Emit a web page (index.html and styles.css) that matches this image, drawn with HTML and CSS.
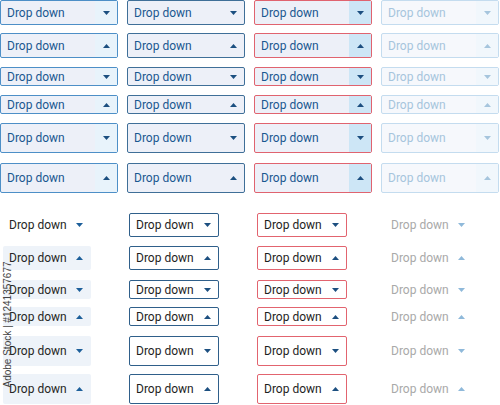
FILE: index.html
```html
<!DOCTYPE html>
<html>
<head>
<meta charset="utf-8">
<link rel="stylesheet" href="styles.css">
</head>
<body>
<div class="top">
  <div class="dd a m"><span class="lbl">Drop down</span><span class="car"><svg viewBox="0 0 7 4" class="dn"><polygon points="0,0 7,0 3.5,4"/></svg></span></div>
  <div class="dd b m"><span class="lbl">Drop down</span><span class="car"><svg viewBox="0 0 7 4" class="dn"><polygon points="0,0 7,0 3.5,4"/></svg></span></div>
  <div class="dd c m"><span class="lbl">Drop down</span><span class="car"><svg viewBox="0 0 7 4" class="dn"><polygon points="0,0 7,0 3.5,4"/></svg></span></div>
  <div class="dd d m"><span class="lbl">Drop down</span><span class="car"><svg viewBox="0 0 7 4" class="dn"><polygon points="0,0 7,0 3.5,4"/></svg></span></div>

  <div class="dd a m"><span class="lbl">Drop down</span><span class="car"><svg viewBox="0 0 7 4"><polygon points="0,4 7,4 3.5,0"/></svg></span></div>
  <div class="dd b m"><span class="lbl">Drop down</span><span class="car"><svg viewBox="0 0 7 4"><polygon points="0,4 7,4 3.5,0"/></svg></span></div>
  <div class="dd c m"><span class="lbl">Drop down</span><span class="car"><svg viewBox="0 0 7 4"><polygon points="0,4 7,4 3.5,0"/></svg></span></div>
  <div class="dd d m"><span class="lbl">Drop down</span><span class="car"><svg viewBox="0 0 7 4"><polygon points="0,4 7,4 3.5,0"/></svg></span></div>

  <div class="dd a s"><span class="lbl">Drop down</span><span class="car"><svg viewBox="0 0 7 4"><polygon points="0,0 7,0 3.5,4"/></svg></span></div>
  <div class="dd b s"><span class="lbl">Drop down</span><span class="car"><svg viewBox="0 0 7 4"><polygon points="0,0 7,0 3.5,4"/></svg></span></div>
  <div class="dd c s"><span class="lbl">Drop down</span><span class="car"><svg viewBox="0 0 7 4"><polygon points="0,0 7,0 3.5,4"/></svg></span></div>
  <div class="dd d s"><span class="lbl">Drop down</span><span class="car"><svg viewBox="0 0 7 4"><polygon points="0,0 7,0 3.5,4"/></svg></span></div>

  <div class="dd a s"><span class="lbl">Drop down</span><span class="car"><svg viewBox="0 0 7 4"><polygon points="0,4 7,4 3.5,0"/></svg></span></div>
  <div class="dd b s"><span class="lbl">Drop down</span><span class="car"><svg viewBox="0 0 7 4"><polygon points="0,4 7,4 3.5,0"/></svg></span></div>
  <div class="dd c s"><span class="lbl">Drop down</span><span class="car"><svg viewBox="0 0 7 4"><polygon points="0,4 7,4 3.5,0"/></svg></span></div>
  <div class="dd d s"><span class="lbl">Drop down</span><span class="car"><svg viewBox="0 0 7 4"><polygon points="0,4 7,4 3.5,0"/></svg></span></div>

  <div class="dd a l"><span class="lbl">Drop down</span><span class="car"><svg viewBox="0 0 7 4"><polygon points="0,0 7,0 3.5,4"/></svg></span></div>
  <div class="dd b l"><span class="lbl">Drop down</span><span class="car"><svg viewBox="0 0 7 4"><polygon points="0,0 7,0 3.5,4"/></svg></span></div>
  <div class="dd c l"><span class="lbl">Drop down</span><span class="car"><svg viewBox="0 0 7 4"><polygon points="0,0 7,0 3.5,4"/></svg></span></div>
  <div class="dd d l"><span class="lbl">Drop down</span><span class="car"><svg viewBox="0 0 7 4"><polygon points="0,0 7,0 3.5,4"/></svg></span></div>

  <div class="dd a l"><span class="lbl">Drop down</span><span class="car"><svg viewBox="0 0 7 4"><polygon points="0,4 7,4 3.5,0"/></svg></span></div>
  <div class="dd b l"><span class="lbl">Drop down</span><span class="car"><svg viewBox="0 0 7 4"><polygon points="0,4 7,4 3.5,0"/></svg></span></div>
  <div class="dd c l"><span class="lbl">Drop down</span><span class="car"><svg viewBox="0 0 7 4"><polygon points="0,4 7,4 3.5,0"/></svg></span></div>
  <div class="dd d l"><span class="lbl">Drop down</span><span class="car"><svg viewBox="0 0 7 4"><polygon points="0,4 7,4 3.5,0"/></svg></span></div>
</div>

<div class="bot">
  <div class="dd e m plain"><span class="lbl">Drop down</span><span class="car"><svg viewBox="0 0 7 4"><polygon points="0,0 7,0 3.5,4"/></svg></span></div>
  <div class="dd f m"><span class="lbl">Drop down</span><span class="car"><svg viewBox="0 0 7 4"><polygon points="0,0 7,0 3.5,4"/></svg></span></div>
  <div class="dd g m"><span class="lbl">Drop down</span><span class="car"><svg viewBox="0 0 7 4"><polygon points="0,0 7,0 3.5,4"/></svg></span></div>
  <div class="dd h m"><span class="lbl">Drop down</span><span class="car"><svg viewBox="0 0 7 4"><polygon points="0,0 7,0 3.5,4"/></svg></span></div>

  <div class="dd e m"><span class="lbl">Drop down</span><span class="car"><svg viewBox="0 0 7 4"><polygon points="0,4 7,4 3.5,0"/></svg></span></div>
  <div class="dd f m"><span class="lbl">Drop down</span><span class="car"><svg viewBox="0 0 7 4"><polygon points="0,4 7,4 3.5,0"/></svg></span></div>
  <div class="dd g m"><span class="lbl">Drop down</span><span class="car"><svg viewBox="0 0 7 4"><polygon points="0,4 7,4 3.5,0"/></svg></span></div>
  <div class="dd h m"><span class="lbl">Drop down</span><span class="car"><svg viewBox="0 0 7 4"><polygon points="0,4 7,4 3.5,0"/></svg></span></div>

  <div class="dd e s"><span class="lbl">Drop down</span><span class="car"><svg viewBox="0 0 7 4"><polygon points="0,0 7,0 3.5,4"/></svg></span></div>
  <div class="dd f s"><span class="lbl">Drop down</span><span class="car"><svg viewBox="0 0 7 4"><polygon points="0,0 7,0 3.5,4"/></svg></span></div>
  <div class="dd g s"><span class="lbl">Drop down</span><span class="car"><svg viewBox="0 0 7 4"><polygon points="0,0 7,0 3.5,4"/></svg></span></div>
  <div class="dd h s"><span class="lbl">Drop down</span><span class="car"><svg viewBox="0 0 7 4"><polygon points="0,0 7,0 3.5,4"/></svg></span></div>

  <div class="dd e s"><span class="lbl">Drop down</span><span class="car"><svg viewBox="0 0 7 4"><polygon points="0,4 7,4 3.5,0"/></svg></span></div>
  <div class="dd f s"><span class="lbl">Drop down</span><span class="car"><svg viewBox="0 0 7 4"><polygon points="0,4 7,4 3.5,0"/></svg></span></div>
  <div class="dd g s"><span class="lbl">Drop down</span><span class="car"><svg viewBox="0 0 7 4"><polygon points="0,4 7,4 3.5,0"/></svg></span></div>
  <div class="dd h s"><span class="lbl">Drop down</span><span class="car"><svg viewBox="0 0 7 4"><polygon points="0,4 7,4 3.5,0"/></svg></span></div>

  <div class="dd e l"><span class="lbl">Drop down</span><span class="car"><svg viewBox="0 0 7 4"><polygon points="0,0 7,0 3.5,4"/></svg></span></div>
  <div class="dd f l"><span class="lbl">Drop down</span><span class="car"><svg viewBox="0 0 7 4"><polygon points="0,0 7,0 3.5,4"/></svg></span></div>
  <div class="dd g l"><span class="lbl">Drop down</span><span class="car"><svg viewBox="0 0 7 4"><polygon points="0,0 7,0 3.5,4"/></svg></span></div>
  <div class="dd h l"><span class="lbl">Drop down</span><span class="car"><svg viewBox="0 0 7 4"><polygon points="0,0 7,0 3.5,4"/></svg></span></div>

  <div class="dd e l"><span class="lbl">Drop down</span><span class="car"><svg viewBox="0 0 7 4"><polygon points="0,4 7,4 3.5,0"/></svg></span></div>
  <div class="dd f l"><span class="lbl">Drop down</span><span class="car"><svg viewBox="0 0 7 4"><polygon points="0,4 7,4 3.5,0"/></svg></span></div>
  <div class="dd g l"><span class="lbl">Drop down</span><span class="car"><svg viewBox="0 0 7 4"><polygon points="0,4 7,4 3.5,0"/></svg></span></div>
  <div class="dd h l"><span class="lbl">Drop down</span><span class="car"><svg viewBox="0 0 7 4"><polygon points="0,4 7,4 3.5,0"/></svg></span></div>
</div>

<div class="wm">Adobe Stock | #1241357677</div>
</body>
</html>
```

FILE: styles.css
```css
html, body {
  margin: 0;
  padding: 0;
  background: #ffffff;
  width: 500px;
  height: 405px;
  overflow: hidden;
  position: relative;
  font-family: Roboto, "Liberation Sans", sans-serif;
}

.top {
  display: grid;
  grid-template-columns: 118px 118px 118px 118px;
  column-gap: 9px;
  grid-template-rows: 33px 34px 28px 28px 40px 30px;
  align-items: start;
}

.bot {
  display: grid;
  margin-top: 20px;
  padding-left: 3px;
  grid-template-columns: 88px 90px 90px 88px;
  column-gap: 38px;
  grid-template-rows: 33px 34px 27px 29px 38px 30px;
  align-items: start;
}

.dd {
  box-sizing: border-box;
  display: flex;
  align-items: stretch;
  border: 1px solid transparent;
  border-radius: 2px;
  font-size: 12px;
}

.dd.m { height: 25px; }
.dd.s { height: 19px; }
.dd.l { height: 30px; }
.bot .dd.m { height: 24px; }

.lbl {
  flex: 1;
  display: flex;
  align-items: center;
  padding-left: 6px;
  white-space: nowrap;
}

.car {
  width: 22px;
  display: flex;
  align-items: center;
  justify-content: center;
}

.car svg {
  width: 7px;
  height: 4px;
  display: block;
}

/* top section */
.a { background: #edf0f8; border-color: #4d8fc7; color: #1a5790; }
.a .car { background: #e8f3fb; }
.a svg { fill: #1c4f80; }

.b { background: #edf0f8; border-color: #3f6f98; color: #1a5790; }
.b svg { fill: #1c4f80; }

.c { background: #edf0f8; border-color: #e0636f; color: #1a5790; }
.c .car { background: #cde6f6; }
.c svg { fill: #1c4f80; }

.d { background: #f6f8fc; border-color: #c4dcef; color: #a6c5dd; }
.d .car { background: #f1f7fc; }
.d svg { fill: #a6c5dd; }

/* bottom section */
.e { background: #eef3f9; color: #262626; border-color: transparent; }
.e.plain { background: transparent; }
.e .lbl { padding-left: 5px; }
.e svg { fill: #1d5f9a; }

.f { background: #ffffff; border-color: #2f5f8a; color: #1e1e1e; }
.f svg { fill: #1c4f80; }

.g { background: #ffffff; border-color: #e2646f; color: #1e1e1e; }
.g svg { fill: #1c4f80; }

.h { background: transparent; color: #a9a9a9; }
.h .lbl { padding-left: 5px; }
.h svg { fill: #8fb9da; }

.wm {
  position: absolute;
  left: -53px;
  top: 322px;
  width: 120px;
  transform: rotate(-90deg);
  font-size: 10px;
  color: #444444;
  white-space: nowrap;
  font-family: "Liberation Sans", sans-serif;
}
```
